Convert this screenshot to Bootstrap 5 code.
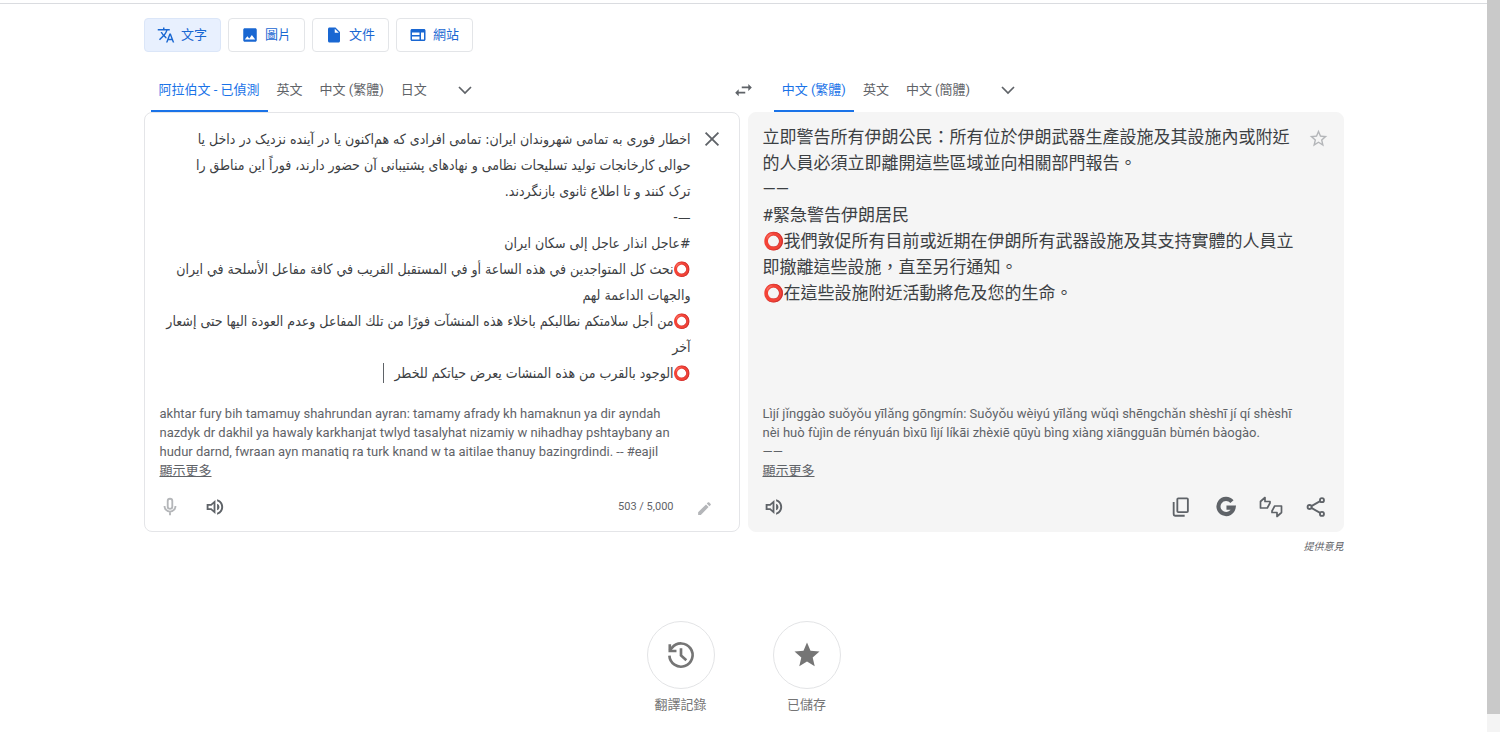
<!DOCTYPE html>
<html lang="zh-Hant">
<head>
<meta charset="utf-8">
<meta name="viewport" content="width=device-width, initial-scale=1">
<title>翻譯</title>
<link href="https://cdn.jsdelivr.net/npm/bootstrap@5.3.0/dist/css/bootstrap.min.css" rel="stylesheet">
<style>
body{font-family:Roboto,"Noto Sans CJK TC",sans-serif;font-size:13px;color:#5f6368;line-height:19px;background:#fff}
svg{display:block;fill:currentColor;flex:none}
svg.line-art{fill:none;stroke:currentColor;stroke-width:2}
svg.fine{stroke-width:1.7}
svg.heavy{stroke-width:4.5}
.page-top{border-top:1px solid #dadce0;margin-top:3px;padding-top:14px}
.wrap{max-width:1200px}
.track{width:13px;background:#f4f4f4}
.thumb{height:714px;background:#c9c9c9}
.modes{gap:7px}
.mode{--bs-btn-padding-x:10px;--bs-btn-padding-y:0;--bs-btn-font-size:13px;--bs-btn-color:#1967d2;--bs-btn-border-color:#e3e5e8;--bs-btn-border-radius:4px;--bs-btn-active-bg:#e8f0fe;--bs-btn-active-color:#1967d2;--bs-btn-active-border-color:#dbe6f8;height:34px;width:77px;gap:6px}
.langs{padding-top:16px}
.tabs{gap:1px}
.tabs-from{padding-left:7px}
.lang{border:0;background:none;padding:0 8px;height:44px;color:#5f6368;border-bottom:2px solid transparent;white-space:nowrap}
.lang.active{color:#1a73e8;border-color:#1a73e8}
.more{margin-left:17px}
.swap{width:60px}
.bare{border:0;background:none;padding:0;color:inherit;display:flex;align-items:center;justify-content:center}
.tool{width:45px;height:45px}
.pane{border:1px solid #e4e5e8;border-radius:8px;min-height:420px}
.pane-out{background:#f5f5f5;border-color:#f5f5f5}
.main-text{font-size:17px;line-height:26px;color:#3c4043}
.source{font-family:"DejaVu Sans Condensed","DejaVu Sans",sans-serif;font-size:14px;border:0;resize:none;padding:2px 0 0;height:272px;outline:0;overflow:hidden;background:none}
.caret{width:1px;height:20px;right:307px;top:239px;background:#5f6368}
.side{width:48px}
.side button{width:42px}
.pane-text{padding:11px 0 0 15px}
.roman{padding:8px 40px 0 15px}
.pane-out .pane-text,.pane-out .roman{padding-left:14px}
.pane-out .side{width:45px}
.roman a,.feedback{color:inherit}
.dim{color:#b4b6b9}
.count{font-size:11px}
.feedback{font-size:10px;font-style:italic;text-decoration:none}
.tools{padding:4px 4px 2px 3px}
.tools-from{padding-right:12px}
.shortcuts{gap:58px;padding-top:65px}
.disc{width:68px;height:68px;border:1px solid #e3e4e6;border-radius:50%}
.shortcut{color:#757575;flex-direction:column;gap:6px}
</style>
</head>
<body>
<svg width="0" height="0" class="position-absolute" aria-hidden="true">
<symbol id="speaker" viewBox="0 0 24 24"><path d="M2 8.500v7h5l5.500 5V3.500L7 8.500H2zm8.300-.3v7.600L7.800 13.400H4.200v-2.800h3.600l2.500-2.400zM17.300 12c0-1.800-1-3.300-2.800-4v8c1.800-.7 2.800-2.200 2.800-4zM14.500 2.800v2.400c2.900.9 5 3.500 5 6.800s-2.100 5.900-5 6.800v2.400c4.200-.9 7.300-4.700 7.300-9.200s-3.100-8.300-7.300-9.200z"/></symbol>
</svg>
<div class="d-flex min-vh-100">
<main class="flex-grow-1 page-top">
<div class="wrap mx-auto">
  <nav class="modes d-flex" aria-label="翻譯類型">
    <button class="btn mode active d-flex align-items-center justify-content-center"><svg width="18" height="18" viewBox="0 0 24 24"><path d="M12.870 15.070l-2.540-2.510.03-.03c1.740-1.940 2.980-4.170 3.710-6.530H17V4h-7V2H8v2H1v1.990h11.170C11.500 7.920 10.440 9.750 9 11.350 8.070 10.320 7.300 9.190 6.690 8h-2c.73 1.630 1.730 3.170 2.980 4.560l-5.090 5.020L4 19l5-5 3.110 3.110.76-2.040zM18.500 10h-2L12 22h2l1.120-3h4.750L21 22h2l-4.500-12zm-2.620 7l1.620-4.330L19.120 17h-3.240z"/></svg>文字</button>
    <button class="btn mode d-flex align-items-center justify-content-center"><svg width="18" height="18" viewBox="0 0 24 24"><path d="M21 19V5c0-1.100-.9-2-2-2H5c-1.100 0-2 .9-2 2v14c0 1.100.9 2 2 2h14c1.100 0 2-.9 2-2zM8.500 13.500l2.500 3.010L14.500 12l4.500 6H5l3.500-4.500z"/></svg>圖片</button>
    <button class="btn mode d-flex align-items-center justify-content-center"><svg width="18" height="18" viewBox="0 0 24 24"><path d="M6 2c-1.100 0-2 .9-2 2v16c0 1.100.9 2 2 2h12c1.100 0 2-.9 2-2V8l-6-6H6zm7 7V3.500L18.500 9H13z"/></svg>文件</button>
    <button class="btn mode d-flex align-items-center justify-content-center"><svg width="18" height="18" viewBox="0 0 24 24"><path d="M20 4H4c-1.100 0-2 .9-2 2v12c0 1.100.9 2 2 2h16c1.100 0 2-.9 2-2V6c0-1.100-.9-2-2-2zm-6 14H4v-4h10v4zm0-6H4V8.500h10V12zm6 6h-4V8.500h4V18z"/></svg>網站</button>
  </nav>

  <div class="langs d-flex">
    <div class="tabs tabs-from d-flex flex-fill w-50">
      <button class="lang active">阿拉伯文 - 已偵測</button><button class="lang">英文</button><button class="lang">中文 (繁體)</button><button class="lang">日文</button>
      <button class="bare more" aria-label="更多來源語言"><svg class="line-art fine" width="24" height="24" viewBox="0 0 24 24"><path d="M6 9l6 6 6-6"/></svg></button>
    </div>
    <button class="bare swap flex-shrink-0" aria-label="交換語言"><svg width="21" height="21" viewBox="0 0 24 24"><path d="M6.500 10.500L2.500 14.500l4 4v-3H14v-2H6.500v-3zM21.500 8.500l-4-4v3H10v2h7.500v3l4-4z"/></svg></button>
    <div class="tabs d-flex flex-fill w-50">
      <button class="lang active">中文 (繁體)</button><button class="lang">英文</button><button class="lang">中文 (簡體)</button>
      <button class="bare more" aria-label="更多目標語言"><svg class="line-art fine" width="24" height="24" viewBox="0 0 24 24"><path d="M6 9l6 6 6-6"/></svg></button>
    </div>
  </div>

  <div class="row g-2">
    <section class="col-6">
      <div class="pane d-flex flex-column">
        <div class="d-flex pane-text">
          <div class="d-flex flex-grow-1 position-relative">
          <textarea class="source main-text flex-grow-1" dir="rtl" lang="fa" aria-label="原文" wrap="off" spellcheck="false">اخطار فوری به تمامی شهروندان ایران: تمامی افرادی که هم‌اکنون یا در آینده نزدیک در داخل یا
حوالی کارخانجات تولید تسلیحات نظامی و نهادهای پشتیبانی آن حضور دارند، فوراً این مناطق را
ترک کنند و تا اطلاع ثانوی بازنگردند.
—-
#عاجل انذار عاجل إلى سكان ايران
⭕نحث كل المتواجدين في هذه الساعة أو في المستقبل القريب في كافة مفاعل الأسلحة في ايران
والجهات الداعمة لهم
⭕من أجل سلامتكم نطالبكم باخلاء هذه المنشآت فورًا من تلك المفاعل وعدم العودة اليها حتى إشعار
آخر
⭕الوجود بالقرب من هذه المنشات يعرض حياتكم للخطر</textarea>
          <span class="caret position-absolute"></span>
          </div>
          <div class="side flex-shrink-0"><button class="bare" aria-label="清除"><svg class="line-art mt-1" width="22" height="22" viewBox="0 0 24 24"><path d="M5 5l14 14M19 5L5 19"/></svg></button></div>
        </div>
        <div class="roman">akhtar fury bih tamamuy shahrundan ayran: tamamy afrady kh hamaknun ya dir ayndah<br>nazdyk dr dakhil ya hawaly karkhanjat twlyd tasalyhat nizamiy w nihadhay pshtaybany an<br>hudur darnd, fwraan ayn manatiq ra turk knand w ta aitilae thanuy bazingrdindi. -- #eajil<br><a href="#">顯示更多</a></div>
        <div class="tools tools-from d-flex align-items-center mt-auto">
          <button class="bare tool dim" aria-label="語音輸入"><svg class="line-art" width="22" height="22" viewBox="0 0 24 24"><rect x="9.500" y="3" width="5" height="11" rx="2.500"/><path d="M6 11a6 6 0 0 0 12 0M12 17v4"/></svg></button>
          <button class="bare tool" aria-label="聆聽"><svg width="20" height="20"><use href="#speaker"/></svg></button>
          <span class="count ms-auto me-2">503 / 5,000</span>
          <button class="bare tool dim" aria-label="手寫"><svg class="mt-1" width="17" height="17" viewBox="0 0 24 24"><path d="M3 17.200V21h3.800L17.800 9.900l-3.700-3.700L3 17.200zM20.700 7c.4-.4.4-1 0-1.400l-2.300-2.300c-.4-.4-1-.4-1.400 0l-1.800 1.800 3.700 3.700L20.700 7z"/></svg></button>
        </div>
      </div>
    </section>
    <section class="col-6">
      <div class="pane pane-out d-flex flex-column h-100">
        <div class="d-flex pane-text">
          <div class="main-text flex-grow-1">立即警告所有伊朗公民：所有位於伊朗武器生產設施及其設施內或附近的人員必須立即離開這些區域並向相關部門報告。<br>——<br>#緊急警告伊朗居民<br>⭕我們敦促所有目前或近期在伊朗所有武器設施及其支持實體的人員立即撤離這些設施，直至另行通知。<br>⭕在這些設施附近活動將危及您的生命。</div>
          <div class="side flex-shrink-0"><button class="bare dim" aria-label="儲存翻譯"><svg class="mt-1" width="21" height="21" viewBox="0 0 24 24"><path d="M22 9.240l-7.190-.62L12 2 9.190 8.630 2 9.240l5.460 4.730L5.820 21 12 17.270 18.180 21l-1.630-7.030L22 9.240zM12 15.400l-3.760 2.270 1-4.280-3.320-2.880 4.380-.38L12 6.100l1.710 4.040 4.380.38-3.320 2.880 1 4.280L12 15.400z"/></svg></button></div>
        </div>
        <div class="roman mt-auto">Lìjí jǐnggào suǒyǒu yīlǎng gōngmín: Suǒyǒu wèiyú yīlǎng wǔqì shēngchǎn shèshī jí qí shèshī<br>nèi huò fùjìn de rényuán bìxū lìjí líkāi zhèxiē qūyù bìng xiàng xiāngguān bùmén bàogào.<br>——<br><a href="#">顯示更多</a></div>
        <div class="tools d-flex align-items-center">
          <button class="bare tool me-auto" aria-label="聆聽"><svg width="20" height="20"><use href="#speaker"/></svg></button>
          <button class="bare tool" aria-label="複製"><svg class="line-art" width="22" height="22" viewBox="0 0 24 24"><rect x="8" y="2.500" width="11.500" height="15" rx="1"/><path d="M4 6.500V20a1.500 1.500 0 0 0 1.500 1.500H16"/></svg></button>
          <button class="bare tool" aria-label="使用 Google 搜尋"><svg class="line-art heavy" width="22" height="22" viewBox="0 0 24 24"><path d="M18.500 6.100A8.300 8.300 0 1 0 20.300 12.700H12.500"/></svg></button>
          <button class="bare tool" aria-label="為這個翻譯評分"><svg class="line-art fine" width="26" height="24" viewBox="0 0 26 24" stroke-linejoin="round"><path d="M2.500 6.500V13h6.800L12 8V6.500H7V2.500L2.500 6.500z"/><path d="M23.500 17.500V11h-6.800L14 16v1.500h5v4l4.500-4z"/></svg></button>
          <button class="bare tool" aria-label="分享翻譯"><svg class="line-art" width="22" height="22" viewBox="0 0 24 24"><circle cx="18.500" cy="4.500" r="2.200"/><circle cx="5" cy="12" r="2.200"/><circle cx="18.500" cy="19.500" r="2.200"/><path d="M7 11l9.500-5.400M7 13l9.500 5.400"/></svg></button>
        </div>
      </div>
    </section>
  </div>
  <div class="text-end pt-1"><a class="feedback d-inline-block" href="#">提供意見</a></div>

  <div class="shortcuts d-flex justify-content-center">
    <button class="bare shortcut"><span class="disc d-flex align-items-center justify-content-center"><svg class="line-art" width="32" height="32" viewBox="0 0 24 24"><path d="M3.300 12.500A8.700 8.700 0 1 0 5.200 6.600L3.500 8.500"/><path d="M3.600 4v5h5"/><path d="M12 7v5.300l4 3.600"/></svg></span>翻譯記錄</button>
    <button class="bare shortcut"><span class="disc d-flex align-items-center justify-content-center"><svg width="30" height="30" viewBox="0 0 24 24"><path d="M12 17.270L18.180 21l-1.640-7.030L22 9.240l-7.190-.61L12 2 9.190 8.630 2 9.240l5.460 4.730L5.820 21z"/></svg></span>已儲存</button>
  </div>
</div>
</main>
<div class="track flex-shrink-0" aria-hidden="true"><div class="thumb"></div></div>
</div>
<script src="https://cdn.jsdelivr.net/npm/bootstrap@5.3.0/dist/js/bootstrap.bundle.min.js"></script>
</body>
</html>
